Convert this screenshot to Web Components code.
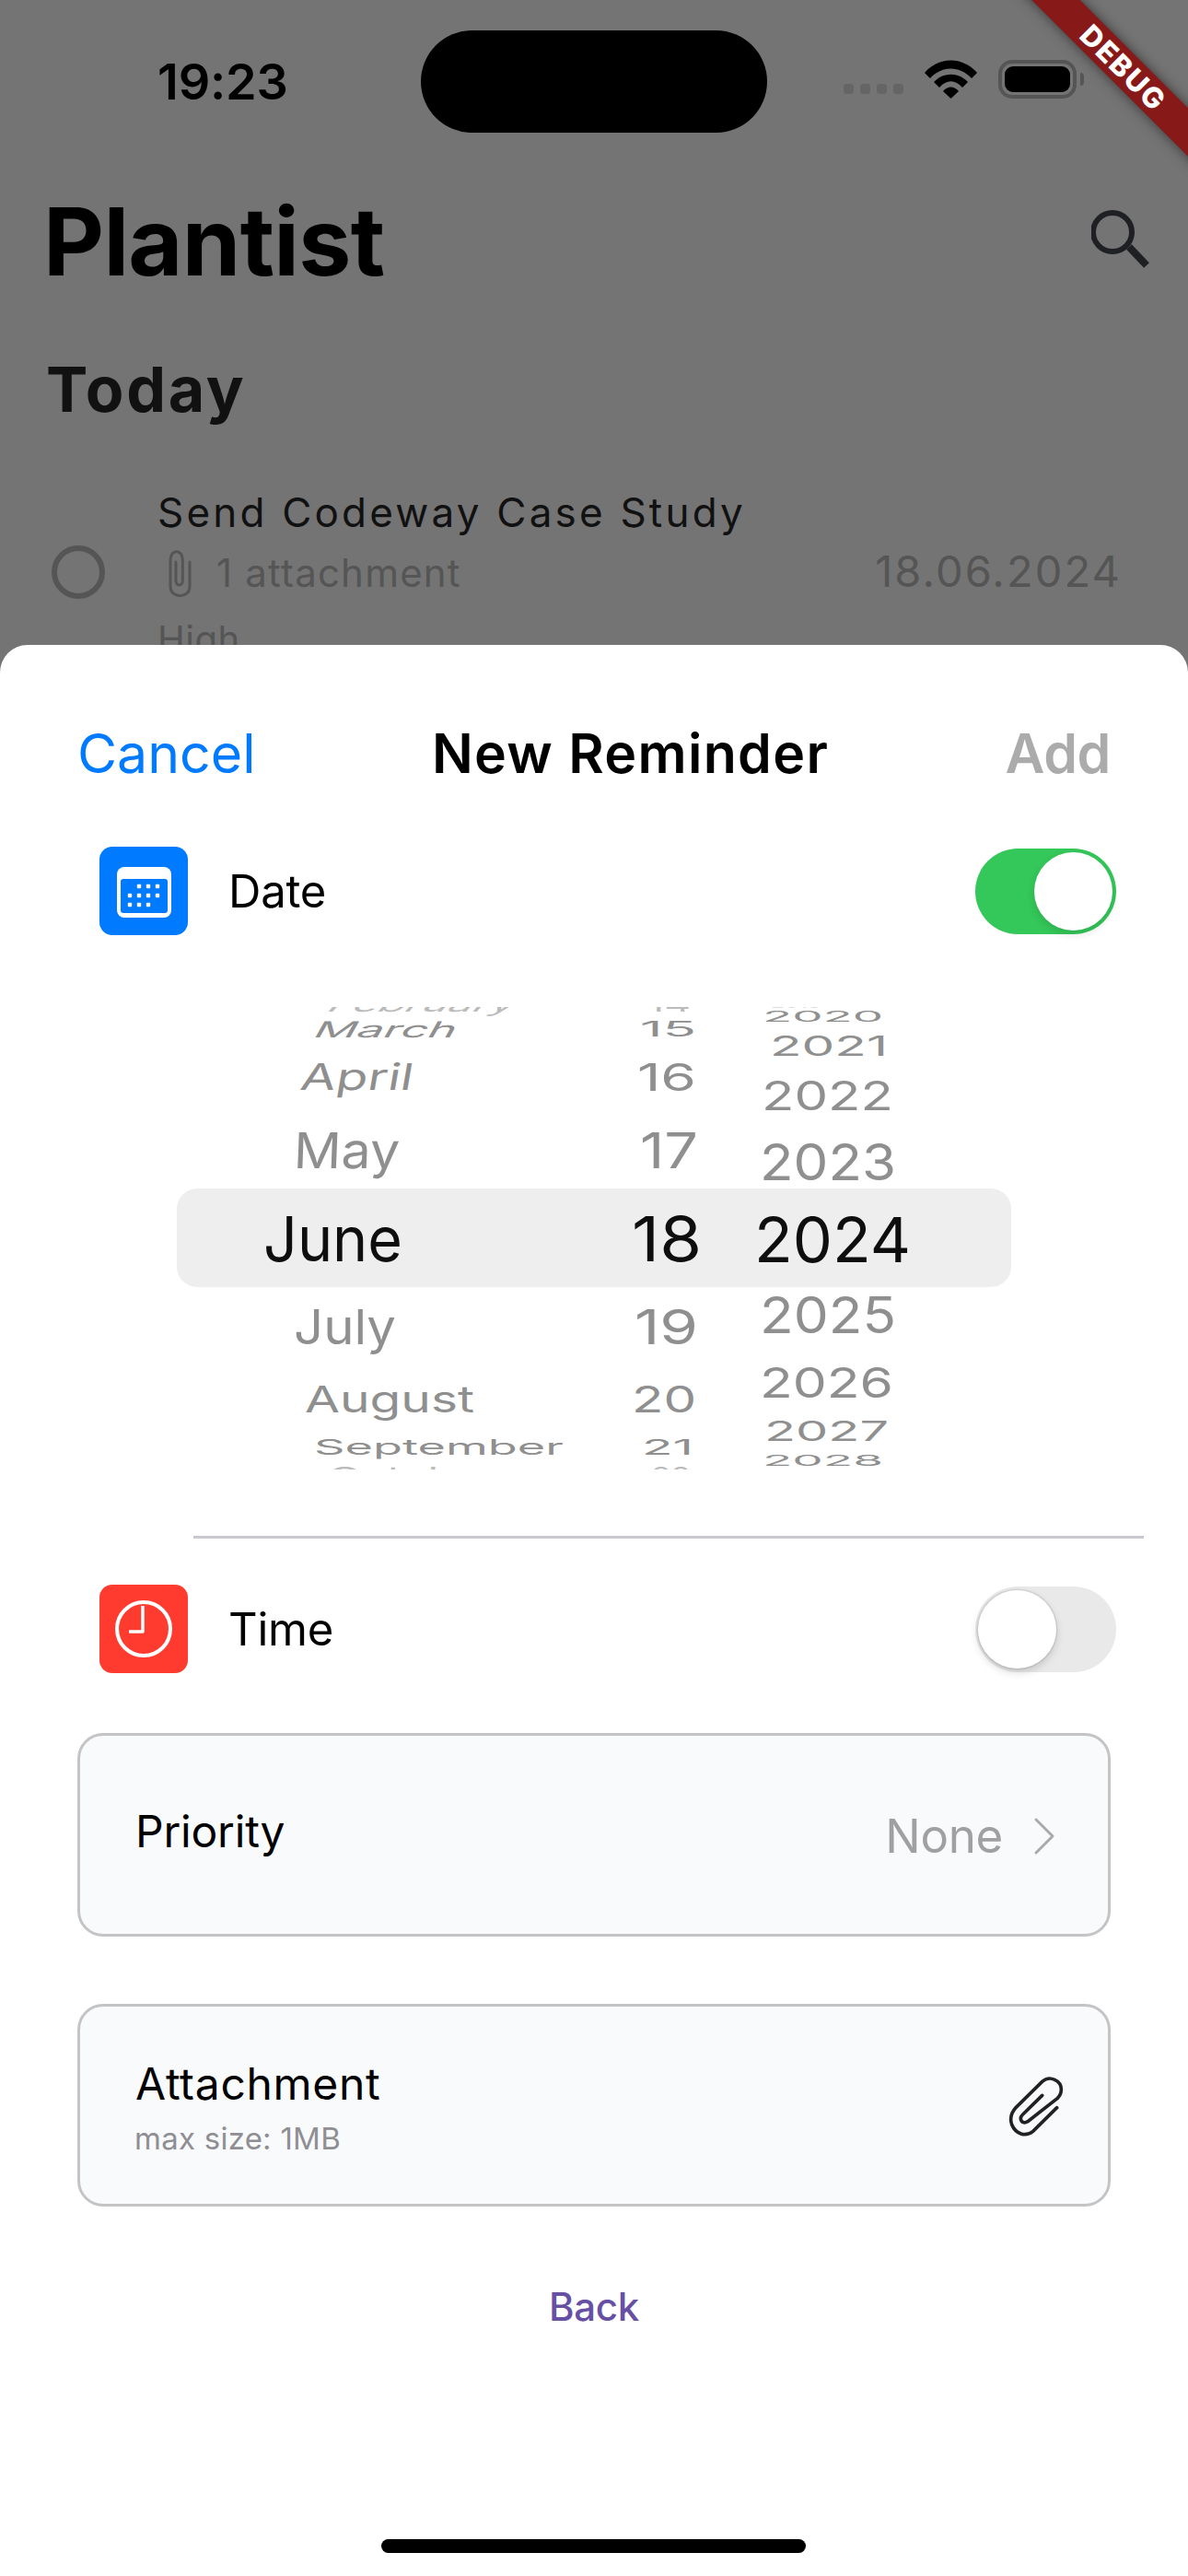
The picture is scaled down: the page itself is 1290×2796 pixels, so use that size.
<!DOCTYPE html>
<html><head><meta charset="utf-8"><title>Plantist</title>
<style>
html,body{margin:0;padding:0;background:#747474}
body{font-family:Inter,"Liberation Sans",sans-serif;width:1290px;height:2796px;overflow:hidden}
</style></head>
<body>
<phone-screen>
  <status-bar></status-bar>
  <list-page></list-page>
  <reminder-sheet>
    <sheet-header></sheet-header>
    <setting-row icon="date" label="Date" on style="margin-top:61px"></setting-row>
    <date-wheel>
      <wheel-col slot="months">
        <wheel-item top="1080" base="1097" x0="363" x1="560" c="-.3" o=".6">February</wheel-item>
        <wheel-item top="1108.6" base="1126" x0="346" x1="494" c="-.2">March</wheel-item>
        <wheel-item top="1154" base="1183" x0="330" x1="446" c="-.1">April</wheel-item>
        <wheel-item top="1229" base="1268" x0="322" x1="431" c="-.03">May</wheel-item>
        <wheel-item top="1320" base="1369" x0="289" x1="434" sel>June</wheel-item>
        <wheel-item top="1421" base="1459" x0="322" x1="427">July</wheel-item>
        <wheel-item top="1504" base="1533" x0="334" x1="512">August</wheel-item>
        <wheel-item top="1562" base="1579" x0="344" x1="609">September</wheel-item>
        <wheel-item top="1592" base="1610" x0="359" x1="537" o=".6">October</wheel-item>
      </wheel-col>
      <wheel-col slot="days">
        <wheel-item top="1080" base="1097" x0="706" x1="747" o=".6">14</wheel-item>
        <wheel-item top="1108.6" base="1125" x0="698" x1="753">15</wheel-item>
        <wheel-item top="1154" base="1184" x0="695" x1="753">16</wheel-item>
        <wheel-item top="1229" base="1268" x0="698" x1="755">17</wheel-item>
        <wheel-item top="1320" base="1369" x0="689" x1="759" sel>18</wheel-item>
        <wheel-item top="1421" base="1459" x0="692" x1="755">19</wheel-item>
        <wheel-item top="1504" base="1533" x0="689" x1="753">20</wheel-item>
        <wheel-item top="1562" base="1579" x0="700" x1="750">21</wheel-item>
        <wheel-item top="1592" base="1610" x0="710" x1="747" o=".6">22</wheel-item>
      </wheel-col>
      <wheel-col slot="years">
        <wheel-item top="1082" base="1094" x0="840" x1="889" o=".3">2019</wheel-item>
        <wheel-item top="1097.5" base="1109" x0="831" x1="956">2020</wheel-item>
        <wheel-item top="1124" base="1146" x0="839" x1="961">2021</wheel-item>
        <wheel-item top="1173" base="1205" x0="830" x1="967">2022</wheel-item>
        <wheel-item top="1241" base="1281" x0="828" x1="970">2023</wheel-item>
        <wheel-item top="1320" base="1369" x0="822" x1="986" sel>2024</wheel-item>
        <wheel-item top="1407.5" base="1447" x0="828" x1="970">2025</wheel-item>
        <wheel-item top="1483" base="1516" x0="828" x1="967">2026</wheel-item>
        <wheel-item top="1542" base="1564" x0="833" x1="962">2027</wheel-item>
        <wheel-item top="1579" base="1591" x0="831" x1="956">2028</wheel-item>
      </wheel-col>
    </date-wheel>
    <hair-line></hair-line>
    <setting-row icon="time" label="Time" style="margin-top:50px"></setting-row>
    <priority-card></priority-card>
    <attachment-card></attachment-card>
    <back-link>Back</back-link>
    <home-bar></home-bar>
  </reminder-sheet>
  <debug-ribbon>DEBUG</debug-ribbon>
</phone-screen>
<script>
const CLIP_SMALL='<path d="M500 85V165C500 205 437 205 437 165V78C437 42 477 42 477 78V145C477 165 455 165 455 145V85" fill="none" stroke="currentColor" stroke-width="9" stroke-linecap="round"/>';
const def=(name,html,setup)=>customElements.define(name,class extends HTMLElement{
  constructor(){super();this.attachShadow({mode:'open'}).innerHTML=html;}
  connectedCallback(){if(setup)setup(this,this.shadowRoot);}
});
def('phone-screen',`<style>:host{display:block;position:relative;width:1290px;height:2796px;overflow:hidden;background:#747474}</style><slot></slot>`);
def('status-bar',`<style>
:host{display:grid;grid-template-columns:457px 376px 1fr;height:111px;padding-top:33px;align-items:center;color:#000}
.t{font-weight:600;font-size:54px;padding-left:171px;line-height:60px;letter-spacing:-.2px}
.i{height:111px;background:#000;border-radius:56px}
.r{display:flex;align-items:center;padding-left:83px;margin-top:-5px}
.d{display:flex;gap:7px;margin-top:21px}.d b{width:11px;height:11px;border-radius:3.5px;background:#656565}
.w{margin-left:23px;width:57px;height:42px}
.bat{margin-left:23px;width:85px;height:42px;box-sizing:border-box;border:4px solid #555;border-radius:15px;padding:3px;display:flex}
.bat i{flex:1;background:#000;border-radius:9px}
.n{width:4px;height:14px;background:#555;border-radius:0 7px 7px 0;margin-left:4px}
</style>
<div class="t">19:23</div><div class="i"></div>
<div class="r"><div class="d"><b></b><b></b><b></b><b></b></div>
<svg class="w" viewBox="0 0 57 42"><path d="M0 14C16 -4 41 -4 57 14L51 20C38 6 19 6 6 20Z M10 24C20 13 37 13 47 24L41 30C33 21 24 21 16 30Z M20 34C25 28 32 28 37 34L28.500 42Z" fill="#000"/></svg>
<div class="bat"><i></i></div><div class="n"></div></div>`);
def('list-page',`<style>
:host{display:block;height:556px;overflow:hidden;color:#000}
.head{display:flex;justify-content:space-between;margin-top:68px;height:100px;padding:0 39px 0 47px}
h1{margin:0;font-size:102px;line-height:100px;font-weight:700;letter-spacing:-.7px}
.s{width:66px;height:72px;margin-top:13px}
h2{margin:0;padding-left:50px;margin-top:65px;font-size:68px;line-height:90px;font-weight:700;color:#111;letter-spacing:2.700px}
.row{display:flex;margin-top:56px;height:200px;color:#555;position:relative}
.c{width:58px;height:58px;box-sizing:border-box;border:6px solid #555;border-radius:50%;margin:69px 0 0 56px}
.col{margin-left:57px;flex:1}
.l1{height:66px;line-height:66px;font-size:44px;color:#111;letter-spacing:3.200px}
.l2{display:flex;align-items:center;height:66px;font-size:42px;line-height:66px;letter-spacing:1.200px}
.l2 svg{width:30px;height:55px;margin:0 24px 0 10px}
.l3{font-size:40px;line-height:78px;height:78px;letter-spacing:.5px}
.dt{font-size:47px;line-height:60px;margin:67px 72px 0 0;letter-spacing:2.100px}
</style>
<div class="head"><h1>Plantist</h1>
<svg class="s" viewBox="0 0 66 72"><circle cx="23" cy="27" r="21" fill="none" stroke="#1f2023" stroke-width="6"/><path d="M41 43L60 63" stroke="#1f2023" stroke-width="8"/></svg></div>
<h2>Today</h2>
<div class="row"><div class="c"></div><div class="col"><div class="l1">Send Codeway Case Study</div>
<div class="l2"><svg viewBox="425 40 90 165">${CLIP_SMALL}</svg><span>1 attachment</span></div><div class="l3">High</div></div>
<div class="dt">18.06.2024</div></div>`);
def('reminder-sheet',`<style>:host{display:flex;flex-direction:column;height:2096px;background:#fff;border-radius:30px 30px 0 0;overflow:hidden;position:relative}</style><slot></slot>`);
def('sheet-header',`<style>
:host{display:flex;justify-content:space-between;align-items:center;height:80px;margin-top:78px;padding:0 84px 0 84px;font-size:59px;line-height:80px}
.c{color:#007AFF}.m{font-weight:600;color:#000;letter-spacing:1.300px}.a{font-weight:600;color:#ababab;letter-spacing:-.4px}
</style><span class="c">Cancel</span><span class="m">New Reminder</span><span class="a">Add</span>`);
const ICONS={
date:`<svg viewBox="0 0 96 96" width="96" height="96"><rect width="96" height="96" rx="14" fill="#007AFF"/><rect x="19" y="22" width="59" height="55" rx="8" fill="#fff"/><rect x="23" y="35" width="51" height="37" rx="3" fill="#007AFF"/><g fill="#fff">${[[43,43],[53,43],[63,43],[33,53],[43,53],[53,53],[63,53],[33,63],[43,63],[53,63]].map(([x,y])=>`<rect x="${x-2.2}" y="${y-2.2}" width="4.4" height="4.4" rx="1"/>`).join('')}</g></svg>`,
time:`<svg viewBox="0 0 96 96" width="96" height="96"><rect width="96" height="96" rx="14" fill="#FF3B30"/><circle cx="48" cy="48" r="29" fill="none" stroke="#fff" stroke-width="4"/><path d="M47 23V51H32" fill="none" stroke="#fff" stroke-width="3.500" stroke-linejoin="round"/></svg>`};
def('setting-row',`<style>
:host{display:flex;align-items:center;height:96px;padding:0 78px 0 108px;font-size:49px;color:#000}
svg{display:block}.l{flex:1;margin-left:44px;letter-spacing:-.2px}
</style><span id="i"></span><span class="l"></span><ios-switch></ios-switch>`,(el,r)=>{
  r.getElementById('i').innerHTML=ICONS[el.getAttribute('icon')];
  r.querySelector('.l').textContent=el.getAttribute('label');
  if(el.hasAttribute('on'))r.querySelector('ios-switch').setAttribute('on','');
});
def('ios-switch',`<style>
:host{display:flex;width:153px;height:93px;box-sizing:border-box;padding:4px 3px;border-radius:47px;background:#E9E9EA}
:host([on]){background:#34C759;justify-content:flex-end;padding-right:4px}
i{display:block;width:85px;height:85px;border-radius:50%;background:#fff;box-shadow:0 4px 10px rgba(0,0,0,.16),0 0 0 1.500px rgba(0,0,0,.07)}
:host([on]) i{box-shadow:0 4px 10px rgba(0,0,0,.12)}
</style><i></i>`);
def('date-wheel',`<style>
:host{display:block;position:relative;height:502px;margin-top:78px;overflow:hidden}
.bar{position:absolute;left:192px;top:197px;width:906px;height:107px;background:#EEEEEF;border-radius:22px}
.g{position:relative;display:grid;grid-template-columns:400px 130px 1fr;padding-left:280px}
</style><div class="bar"></div><div class="g"><slot name="months"></slot><slot name="days"></slot><slot name="years"></slot></div>`);
const T0=1093;
const cy=e=>(+e.getAttribute('top')+ +e.getAttribute('base'))/2;
def('wheel-col',`<style>:host{display:block}</style><slot></slot>`,el=>{el.style.marginTop=(cy(el.firstElementChild)-T0)+'px';});
const cv=document.createElement('canvas').getContext('2d');
const COLS={months:280,days:680,years:810};
def('wheel-item',`<style>
:host{display:block;color:#8f8f8f}:host([sel]){color:#0e0e0e}
span{display:block;width:max-content;height:0;line-height:0;font-size:68px;white-space:nowrap;transform-origin:0 0}
</style><span><slot></slot></span>`,(el,r)=>{
  const n=el.nextElementSibling,g=k=>+el.getAttribute(k);
  el.style.height=(n?cy(n)-cy(el):40)+'px';
  if(el.hasAttribute('o'))el.style.opacity=el.getAttribute('o');
  cv.font='400 68px Inter';
  const sx=(g('x1')-g('x0')+6)/cv.measureText(el.textContent).width;
  const sy=(g('base')-g('top'))/49.4;
  const s=r.querySelector('span');
  s.style.marginLeft=(g('x0')-3-COLS[el.parentElement.slot])+'px';
  s.style.transform=`matrix(${sx},0,${el.getAttribute('c')||0},${sy},0,0)`;
});
def('hair-line',`<style>:host{display:block;height:3px;background:#C9C8CE;margin:72px 48px 0 210px}</style>`);
def('priority-card',`<style>
:host{display:flex;align-items:center;box-sizing:border-box;height:221px;margin:65px 84px 0 84px;border:3px solid #C4C4C6;border-radius:28px;background:#F9FAFC;padding:0 56px 0 60px}
.l{flex:1;font-size:48px;color:#000;margin-top:-9px;letter-spacing:-.2px}.v{font-size:51px;color:#a0a0a0;margin-top:2px;letter-spacing:-.3px}
svg{width:26px;height:42px;margin-left:32px;margin-top:2px}
</style><span class="l">Priority</span><span class="v">None</span><svg viewBox="0 0 26 42"><path d="M4 3L22 21L4 39" fill="none" stroke="#aaa" stroke-width="3" stroke-linecap="round" stroke-linejoin="round"/></svg>`);
def('attachment-card',`<style>
:host{display:flex;align-items:center;box-sizing:border-box;height:220px;margin:73px 84px 0 84px;border:3px solid #C4C4C6;border-radius:28px;background:#F9FAFC;padding:0 48px 0 60px}
.c{flex:1;margin-top:3px}.l{font-size:48px;line-height:60px;color:#000;letter-spacing:.7px}.v{font-size:33px;line-height:40px;color:#8e8e93;margin-top:9px;letter-spacing:.25px;margin-left:-1px}
svg{width:90px;height:90px;margin-right:-15px}
</style><div class="c"><div class="l">Attachment</div><div class="v">max size: 1MB</div></div><svg viewBox="0 0 270 270"><path d="M203 143L125 220C100 240 68 228 56 198C48 175 58 155 70 142L155 58C180 36 218 55 217 85C217 95 212 105 205 112L108 188C88 200 78 178 92 165L155 103" fill="none" stroke="#222" stroke-width="11" stroke-linecap="round"/></svg>`);
def('back-link',`<style>:host{display:block;margin-top:79px;text-align:center;font-size:42px;line-height:60px;color:#6750A4;font-weight:500;letter-spacing:-.3px}</style><slot></slot>`);
def('home-bar',`<style>:host{display:block;width:461px;height:15px;border-radius:8px;background:#000;margin:222px 0 0 414px}</style>`);
def('debug-ribbon',`<style>
:host{position:absolute;left:1020px;top:55px;width:400px;height:37px;line-height:37px;text-align:center;background:#871919;color:#fff;font-weight:800;font-size:31px;transform:rotate(45deg);box-shadow:0 0 14px rgba(0,0,0,.55);letter-spacing:1.800px}
</style><slot></slot>`);
</script>
</body></html>
